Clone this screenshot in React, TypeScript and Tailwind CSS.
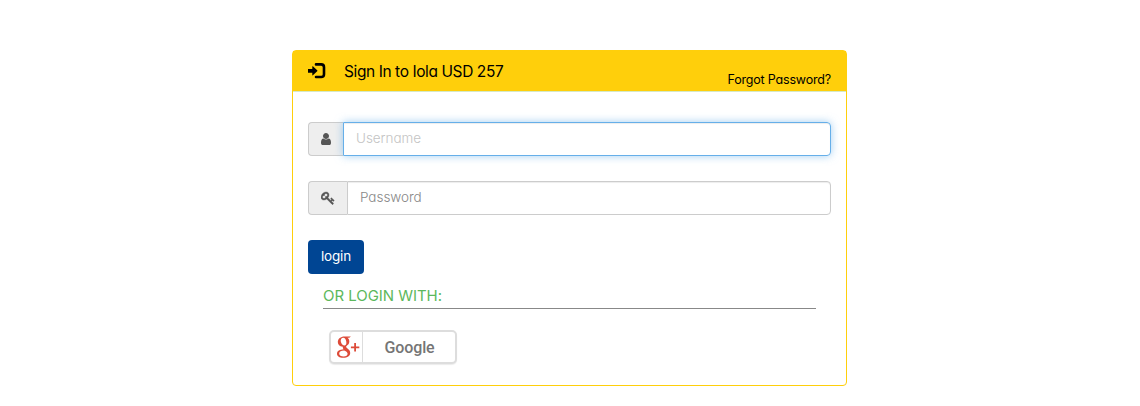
import React from "react";

const UserIcon = () => (
  <svg viewBox="0 0 1280 1792" className="h-[14px] w-[10px]" fill="currentColor">
    <path d="M1280 1399q0 109-62.5 187t-150.5 78h-854q-88 0-150.5-78t-62.5-187q0-85 8.5-160.5t31.5-152 58.5-131 94-89 134.5-34.5q131 128 313 128t313-128q76 0 134.5 34.5t94 89 58.5 131 31.5 152 8.5 160.5zm-256-887q0 159-112.5 271.5t-271.5 112.5-271.5-112.5-112.5-271.5 112.5-271.5 271.5-112.5 271.5 112.5 112.5 271.5z" />
  </svg>
);

const KeyIcon = () => (
  <svg viewBox="0 0 1792 1792" className="h-[14px] w-[14px]" fill="currentColor" stroke="currentColor" strokeWidth="50">
    <path d="M832 512q0-80-56-136t-136-56-136 56-56 136q0 42 19 83-41-19-83-19-80 0-136 56t-56 136 56 136 136 56 136-56 56-136q0-42-19-83 41 19 83 19 80 0 136-56t56-136zm851 704q0 17-49 66t-66 49q-9 0-28.5-16t-36.5-33-38.5-40-24.5-26l-96 96 220 220q28 28 28 68 0 42-39 81t-81 39q-40 0-68-28l-671-671q-176 131-365 131-163 0-265.5-102.5t-102.5-265.5q0-160 95-313t248-248 313-95q163 0 265.5 102.5t102.5 265.5q0 189-131 365l355 355 96-96q-3-3-26-24.5t-40-38.5-33-36.5-16-28.5q0-17 49-66t66-49q13 0 23 10 6 6 46 44.5t82 79.5 86.5 86 73 78 28.5 41z" />
  </svg>
);

const LogInIcon = () => (
  <svg viewBox="0 0 18 16" className="h-4 w-[18px]" fill="currentColor">
    <path d="M8 1.4h5.2q2.8 0 2.8 2.8v7q0 2.8-2.8 2.8H8" fill="none" stroke="currentColor" strokeWidth="2.6" strokeLinecap="round" />
    <path d="M0 6.1h4.3V3.6q0-.7.6-.3l4.3 4q.5.5 0 1l-4.3 4q-.6.4-.6-.3V9.7H0z" />
  </svg>
);

const GooglePlusLogo = () => (
  <svg viewBox="0 0 24 24" className="h-6 w-6" fill="#dd4b39">
    <path fillRule="evenodd" d="M8.4 1.5h6.5l-1.6 1.2h-1.8c1.2.9 1.8 2.1 1.8 3.7 0 1.9-.9 3.1-2.3 4.2-1.2.9-1.2 1.5-.1 2.4 2.2 1.6 3.3 2.8 3.3 4.9 0 2.9-2.7 4.8-7 4.8-3.8 0-6.2-1.5-6.2-4 0-2.9 2.9-4.3 6.6-4.5-.8-.9-1-1.7-.6-2.5-3.2.2-5.2-1.9-5.2-4.6 0-3.4 3-5.6 6.6-5.6zM7.2 2.7c-1.8.1-2.8 1.8-2.4 3.9.5 2.4 1.8 4 3.4 3.9 1.7-.1 2.5-1.6 2.1-3.8-.4-2.5-1.6-4.1-3.1-4zM8.2 15.4c-2.9 0-5 1-5 3 0 1.8 1.7 3 4.5 3 2.5 0 3.9-1 3.9-2.6 0-1.5-1-2.2-3.4-3.4z" />
    <path d="M18.2 8h1.8v3.4h3.3v1.8H20v3.4h-1.8v-3.4h-3.3v-1.8h3.3z" />
  </svg>
);

export default function App() {
  return (
    <main className="flex h-[406px] justify-center bg-white pt-[50px] pr-px font-['Inter',sans-serif] text-black [font-feature-settings:'cv11']">
      <section className="h-[336px] w-[555px] rounded border border-[#ffcf0b] bg-white">
        <header className="flex h-[41px] justify-between border-b border-[#d6e9c6] bg-[#ffcf0b] px-[15px]">
          <h1 className="flex text-[15.5px]">
            <span className="mt-3 w-9"><LogInIcon /></span>
            <span className="mt-[9px] w-[160px] whitespace-nowrap leading-6 tracking-[-0.41px]">Sign In to Iola USD 257</span>
          </h1>
          <a href="#" className="mt-5 whitespace-nowrap text-[12.5px] leading-[18px] tracking-[-0.18px]">Forgot Password?</a>
        </header>
        <form className="px-[15px] pt-[30px]">
          <div className="flex h-[34px]">
            <span className="flex w-[35px] shrink-0 items-center justify-center rounded-l border border-r-0 border-[#ccc] bg-[#eee] text-[#555]"><UserIcon /></span>
            <input aria-label="Username" placeholder="Username" className="min-w-0 flex-1 rounded-r border border-[#66afe9] px-3 pb-0.5 text-[13.5px] font-light tracking-[-0.04px] shadow-[inset_0_1px_1px_rgba(0,0,0,.075),0_0_8px_rgba(102,175,233,.6)] outline-none placeholder:text-[#c4c4c4]" />
          </div>
          <div className="mt-[25px] flex h-[34px]">
            <span className="flex w-[39px] shrink-0 items-center justify-center rounded-l border border-r-0 border-[#ccc] bg-[#eee] text-[#555]"><KeyIcon /></span>
            <input type="password" aria-label="Password" placeholder="Password" className="min-w-0 flex-1 rounded-r border border-[#ccc] px-3 pb-0.5 text-[13.5px] font-light tracking-[-0.04px] shadow-[inset_0_1px_1px_rgba(0,0,0,.075)] outline-none placeholder:text-[#888]" />
          </div>
          <button type="button" className="mt-[25px] block h-[34px] w-14 rounded bg-[#004593] pb-px text-[13.5px] tracking-[-0.2px] text-white">login</button>
          <div className="mx-[15px] mt-2.5 h-[25px] border-b border-[#888] text-[15px] leading-6 tracking-[-0.04px] text-[#5cb85c]">OR LOGIN WITH:</div>
          <button type="button" className="mt-[21px] ml-[21px] flex h-[34px] w-32 items-stretch rounded-[5px] border-2 border-[#ddd] bg-white shadow-[0_1px_1px_rgba(0,0,0,.08)]">
            <span className="flex w-8 items-center justify-end border-r border-[#ddd] pr-0.5"><GooglePlusLogo /></span>
            <span className="flex flex-1 items-center justify-center pt-px pl-px font-['Roboto',sans-serif] text-[16px] font-medium tracking-[-0.1px] text-[#757575]">Google</span>
          </button>
        </form>
      </section>
    </main>
  );
}
